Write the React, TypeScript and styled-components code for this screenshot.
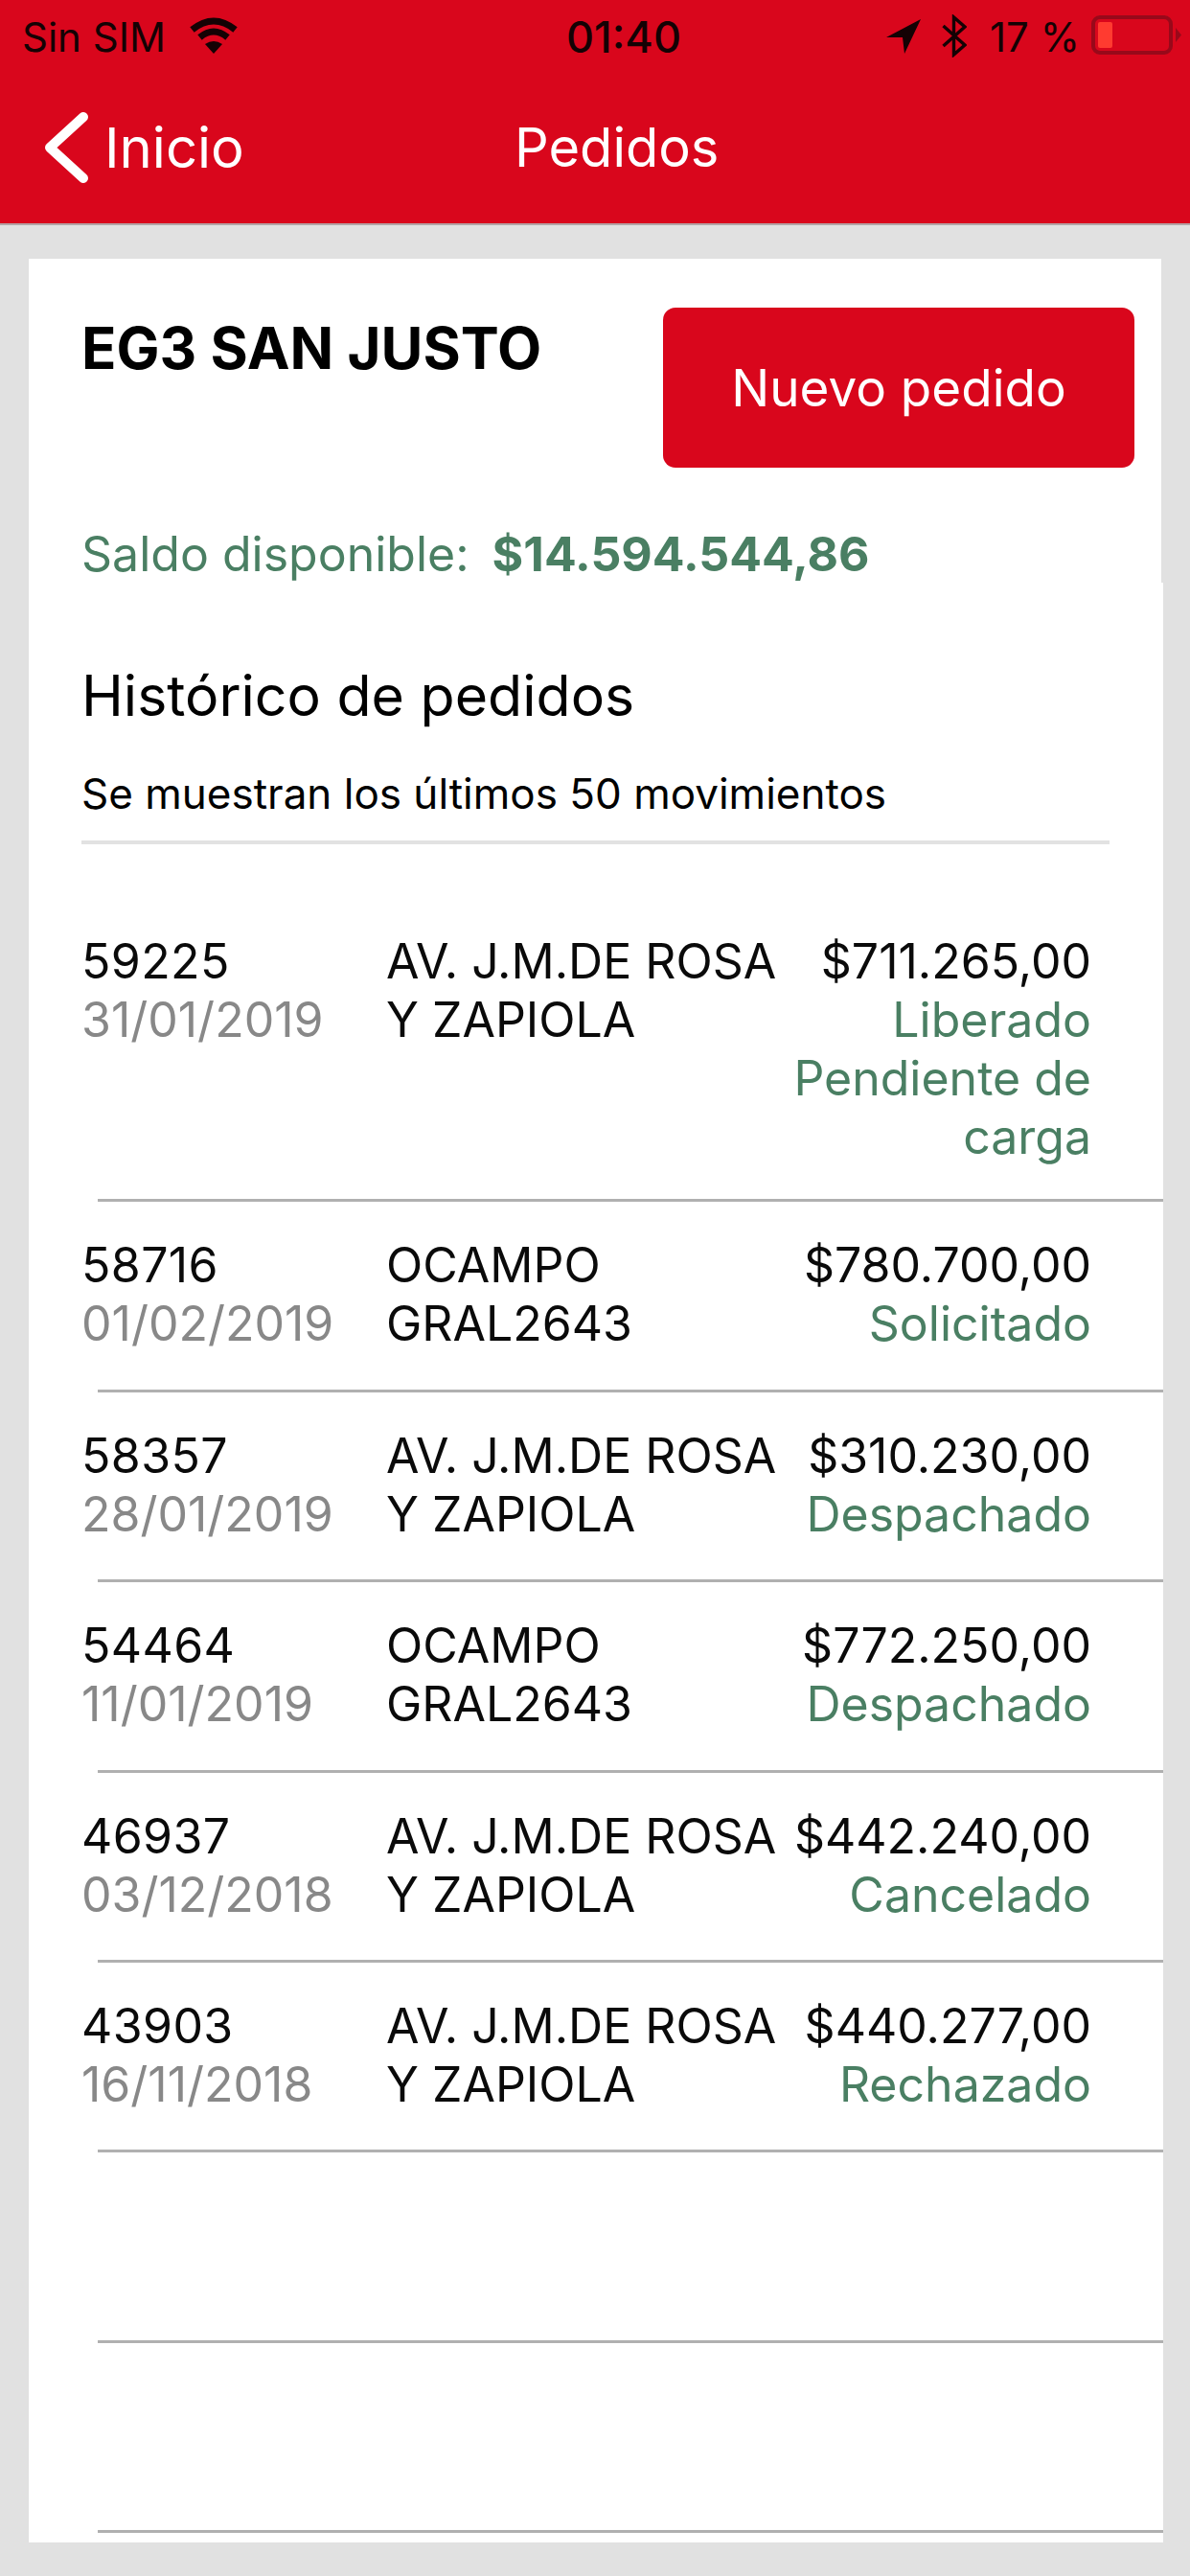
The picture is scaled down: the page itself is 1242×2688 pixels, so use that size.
import styled, { createGlobalStyle } from 'styled-components';

type Order = {
  id: string;
  date: string;
  address: [string, string];
  amount: string;
  status: string;
};

const orders: Order[] = [
  { id: '59225', date: '31/01/2019', address: ['AV. J.M.DE ROSA', 'Y ZAPIOLA'], amount: '$711.265,00', status: 'Liberado Pendiente de carga' },
  { id: '58716', date: '01/02/2019', address: ['OCAMPO', 'GRAL2643'], amount: '$780.700,00', status: 'Solicitado' },
  { id: '58357', date: '28/01/2019', address: ['AV. J.M.DE ROSA', 'Y ZAPIOLA'], amount: '$310.230,00', status: 'Despachado' },
  { id: '54464', date: '11/01/2019', address: ['OCAMPO', 'GRAL2643'], amount: '$772.250,00', status: 'Despachado' },
  { id: '46937', date: '03/12/2018', address: ['AV. J.M.DE ROSA', 'Y ZAPIOLA'], amount: '$442.240,00', status: 'Cancelado' },
  { id: '43903', date: '16/11/2018', address: ['AV. J.M.DE ROSA', 'Y ZAPIOLA'], amount: '$440.277,00', status: 'Rechazado' },
];

const GlobalStyle = createGlobalStyle`
  html, body {
    margin: 0;
    padding: 0;
    background: #e1e1e1;
  }

  * {
    box-sizing: border-box;
  }
`;

const Page = styled.div`
  width: 1242px;
  height: 2688px;
  overflow: hidden;
  background: #e1e1e1;
  font-family: Inter, 'Liberation Sans', Arial, sans-serif;
  color: #0a0a0a;
`;

const Header = styled.header`
  height: 235px;
  background: #d9061c;
  border-bottom: 2px solid #b3a4a6;
`;

const StatusBar = styled.div`
  display: flex;
  align-items: flex-start;
  height: 77px;
  padding: 15px 0 0 23px;
  font-size: 42px;
  line-height: 48px;
  color: #140204;
`;

const Carrier = styled.span`
  width: 174px;
`;

const WifiIcon = styled.svg`
  width: 52px;
  height: 38px;
  margin-top: 3px;
`;

const Clock = styled.span`
  margin-left: 342px;
  width: 334px;
  font-weight: 500;
  font-size: 45px;
`;

const LocationIcon = styled.svg`
  width: 36px;
  height: 36px;
  margin-top: 5px;
`;

const BluetoothIcon = styled.svg`
  width: 26px;
  height: 45px;
  margin: 0 0 0 22px;
`;

const Percent = styled.span`
  margin-left: 24px;
  width: 106px;
  font-size: 42px;
`;

const Battery = styled.div`
  position: relative;
  width: 85px;
  height: 41px;
  margin-top: 1px;
  padding: 3px;
  border: 4px solid #98091a;
  border-radius: 9px;

  &::after {
    content: '';
    position: absolute;
    top: 9px;
    right: -13px;
    width: 6px;
    height: 15px;
    background: #98091a;
    clip-path: polygon(0 0, 100% 50%, 0 100%);
  }
`;

const BatteryLevel = styled.div`
  width: 15px;
  height: 100%;
  border-radius: 2px;
  background: #ff3b30;
`;

const NavBar = styled.nav`
  display: flex;
  align-items: flex-start;
  padding: 39px 0 0 46px;
  color: #fff;
  font-size: 56px;
  line-height: 66px;
`;

const BackChevron = styled.svg`
  width: 46px;
  height: 76px;
`;

const BackLabel = styled.span`
  margin: 5px 0 0 17px;
  width: 144px;
  font-size: 58px;
`;

const NavTitle = styled.span`
  margin: 5px 0 0 284px;
`;

const Card = styled.main`
  width: 1182px;
  height: 2382px;
  margin: 35px 0 0 30px;
  background: #fff;
`;

const CardTop = styled.section`
  padding: 51px 28px 0 55px;
`;

const TitleRow = styled.div`
  display: flex;
  justify-content: space-between;
  align-items: flex-start;
`;

const Branch = styled.h1`
  margin: 7px 0 0;
  font-size: 60px;
  line-height: 70px;
  font-weight: 700;
  color: #000;
`;

const NewOrderButton = styled.button`
  width: 492px;
  height: 167px;
  padding: 0;
  border: none;
  border-radius: 13px;
  background: #d9061c;
  color: #fff;
  font-family: inherit;
  font-size: 53px;
`;

const Balance = styled.p`
  margin: 60px 0 0;
  font-size: 50px;
  line-height: 60px;
  color: #4a7f63;

  strong {
    margin-left: 24px;
    font-weight: 700;
  }
`;

const CardBottom = styled.section`
  width: 1184px;
  height: 2045px;
  padding-top: 81px;
  background: #fff;
`;

const HistoryTitle = styled.h2`
  margin: 0 0 0 55px;
  font-size: 59px;
  line-height: 74px;
  font-weight: 400;
  color: #000;
`;

const HistoryNote = styled.p`
  margin: 38px 0 0 55px;
  font-size: 44px;
  line-height: 54px;
  color: #000;
`;

const HistoryDivider = styled.hr`
  width: 1073px;
  height: 4px;
  margin: 22px 0 0 55px;
  border: none;
  background: #e2e2e2;
`;

const OrderList = styled.ul`
  list-style: none;
  margin: 56px 0 0;
  padding: 0;
`;

const OrderRow = styled.li`
  display: grid;
  grid-template-columns: 318px 415px 321px;
  min-height: 198.4px;
  padding: 36px 0 37.4px 55px;
  font-size: 50px;
  line-height: 61px;
  position: relative;

  &::after {
    content: '';
    position: absolute;
    left: 72px;
    right: 0;
    bottom: 0;
    height: 3px;
    background: #b0b0b0;
  }
`;

const OrderId = styled.div`
  letter-spacing: 0.4px;
`;

const OrderDate = styled.div`
  color: #888;
`;

const OrderAddress = styled.div`
  white-space: nowrap;
`;

const OrderAmount = styled.div`
  white-space: nowrap;
`;

const OrderStatus = styled.div`
  color: #4a7f63;
`;

const OrderRight = styled.div`
  text-align: right;
`;

function Wifi() {
  return (
    <WifiIcon viewBox="0 0 52 38" fill="none" stroke="#140204">
      <path d="M3.5 13 Q26 -5 48.5 13" strokeWidth="7" />
      <path d="M11.5 21 Q26 9 40.5 21" strokeWidth="7" />
      <path d="M17 28 Q26 22 35 28 L26 38 Z" fill="#140204" stroke="none" />
    </WifiIcon>
  );
}

function Location() {
  return (
    <LocationIcon viewBox="0 0 36 36">
      <path d="M36 0 L0 19 L17 19 L19 36 Z" fill="#140204" />
    </LocationIcon>
  );
}

function Bluetooth() {
  return (
    <BluetoothIcon viewBox="0 0 26 45" fill="none" stroke="#140204" strokeWidth="3.4">
      <path d="M1.5 12 L24 32 L12.5 42 V3 L24 13 L1.5 33" />
    </BluetoothIcon>
  );
}

function Chevron() {
  return (
    <BackChevron viewBox="0 0 46 76" fill="none" stroke="#fff" strokeWidth="10" strokeLinecap="round" strokeLinejoin="round">
      <path d="M41 6 L6 38 L41 70" />
    </BackChevron>
  );
}

export default function App() {
  return (
    <Page>
      <GlobalStyle />
      <Header>
        <StatusBar>
          <Carrier>Sin SIM</Carrier>
          <Wifi />
          <Clock>01:40</Clock>
          <Location />
          <Bluetooth />
          <Percent>17 %</Percent>
          <Battery>
            <BatteryLevel />
          </Battery>
        </StatusBar>
        <NavBar>
          <Chevron />
          <BackLabel>Inicio</BackLabel>
          <NavTitle>Pedidos</NavTitle>
        </NavBar>
      </Header>
      <Card>
        <CardTop>
          <TitleRow>
            <Branch>EG3 SAN JUSTO</Branch>
            <NewOrderButton type="button">Nuevo pedido</NewOrderButton>
          </TitleRow>
          <Balance>
            Saldo disponible:
            <strong>$14.594.544,86</strong>
          </Balance>
        </CardTop>
        <CardBottom>
          <HistoryTitle>Histórico de pedidos</HistoryTitle>
          <HistoryNote>Se muestran los últimos 50 movimientos</HistoryNote>
          <HistoryDivider />
          <OrderList>
            {orders.map((order) => (
              <OrderRow key={order.id}>
                <div>
                  <OrderId>{order.id}</OrderId>
                  <OrderDate>{order.date}</OrderDate>
                </div>
                <OrderAddress>
                  {order.address[0]}
                  <br />
                  {order.address[1]}
                </OrderAddress>
                <OrderRight>
                  <OrderAmount>{order.amount}</OrderAmount>
                  <OrderStatus>{order.status}</OrderStatus>
                </OrderRight>
              </OrderRow>
            ))}
            <OrderRow />
            <OrderRow />
          </OrderList>
        </CardBottom>
      </Card>
    </Page>
  );
}
